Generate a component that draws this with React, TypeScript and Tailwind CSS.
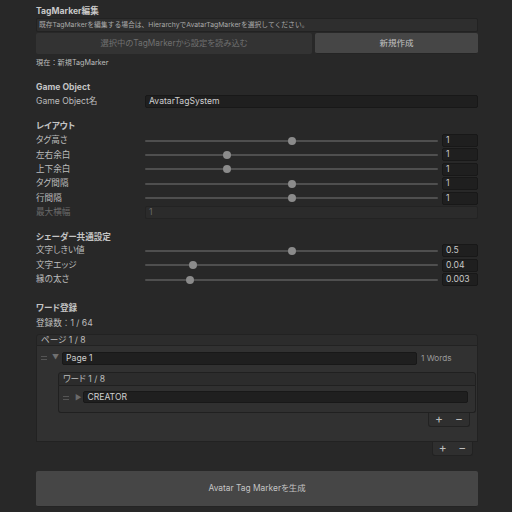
import React from 'react';

const font = { fontFamily: 'Inter, "Noto Sans CJK JP", sans-serif' };

type SliderRowProps = { label: string; value: string; pos: number };

// knob position is a fraction of the track width
const SliderRow: React.FC<SliderRowProps> = ({ label, value, pos }) => (
  <div className="flex items-center h-[14.4px]">
    <span className="w-[109px] text-[#bdbdbd]">{label}</span>
    <div className="relative flex-1 h-full flex items-center mr-[4px]">
      <div className="w-full h-[2px] bg-[#4f4f4f] rounded" />
      <div
        className="absolute w-[8px] h-[8px] rounded-full bg-[#8b8b8b] -translate-x-1/2"
        style={{ left: `${pos * 100}%` }}
      />
    </div>
    <div className="w-[36px] h-[13px] bg-[#1f1f1f] border border-[#181818] rounded-[2px] px-[3px] leading-[11px] text-[#c8c8c8]">
      {value}
    </div>
  </div>
);

const Handle = () => (
  <div className="flex flex-col gap-[2px] w-[6px]">
    <div className="h-px bg-[#555555]" />
    <div className="h-px bg-[#555555]" />
  </div>
);

const PlusMinus: React.FC<{ className?: string }> = ({ className }) => (
  <div
    className={`flex items-center justify-around h-[14px] bg-[#2f2f2f] border border-t-0 border-[#222222] rounded-b-[3px] text-[#bdbdbd] text-[12px] leading-none ${className ?? ''}`}
  >
    <span>+</span>
    <span>−</span>
  </div>
);

export default function App() {
  return (
    <div
      className="w-[512px] h-[512px] bg-[#282828] overflow-hidden text-[8.6px] [font-feature-settings:'palt']"
      style={font}
    >
      <div className="ml-[36px] w-[442px] flex flex-col">
        {/* TagMarker 編集 */}
        <div className="mt-[5px] h-[12px] leading-[12px] font-bold text-[#c8c8c8]">TagMarker編集</div>
        <div className="mt-[1px] h-[14px] bg-[#2e2e2e] border border-[#222222] rounded-[2px] px-[2px] leading-[12px] text-[#a8a8a8] text-[6.8px] whitespace-nowrap overflow-hidden [font-feature-settings:normal]">
          既存TagMarkerを編集する場合は、HierarchyでAvatarTagMarkerを選択してください。
        </div>
        <div className="mt-[1px] flex gap-[3px] h-[21px]">
          <div className="w-[276px] bg-[#333333] rounded-[2px] flex items-center justify-center text-[#707070] text-[8.3px]">
            選択中のTagMarkerから設定を読み込む
          </div>
          <div className="flex-1 bg-[#464646] rounded-[2px] border-b border-[#242424] flex items-center justify-center text-[#c4c4c4] text-[8.5px]">
            新規作成
          </div>
        </div>
        <div className="mt-[3px] h-[12px] leading-[12px] text-[#bdbdbd] text-[7.2px] [font-feature-settings:normal]">
          現在：新規TagMarker
        </div>

        {/* Game Object */}
        <div className="mt-[11px] h-[14px] leading-[14px] font-bold text-[#c4c4c4]">Game Object</div>
        <div className="flex items-center h-[14.4px]">
          <span className="w-[109px] text-[#bdbdbd]">Game Object名</span>
          <div className="flex-1 h-[13px] bg-[#1f1f1f] border border-[#181818] rounded-[2px] px-[3px] leading-[11px] text-[#d0d0d0]">
            AvatarTagSystem
          </div>
        </div>

        {/* レイアウト */}
        <div className="mt-[11px] h-[14px] leading-[14px] font-bold text-[#c4c4c4]">レイアウト</div>
        <SliderRow label="タグ高さ" value="1" pos={0.5} />
        <SliderRow label="左右余白" value="1" pos={0.28} />
        <SliderRow label="上下余白" value="1" pos={0.28} />
        <SliderRow label="タグ間隔" value="1" pos={0.5} />
        <SliderRow label="行間隔" value="1" pos={0.5} />
        <div className="flex items-center h-[14.4px]">
          <span className="w-[109px] text-[#6a6a6a]">最大横幅</span>
          <div className="flex-1 h-[13px] bg-[#2b2b2b] border border-[#232323] rounded-[2px] px-[3px] leading-[11px] text-[#6a6a6a]">
            1
          </div>
        </div>

        {/* シェーダー共通設定 */}
        <div className="mt-[10px] h-[14px] leading-[14px] font-bold text-[#c4c4c4]">シェーダー共通設定</div>
        <SliderRow label="文字しきい値" value="0.5" pos={0.5} />
        <SliderRow label="文字エッジ" value="0.04" pos={0.165} />
        <SliderRow label="縁の太さ" value="0.003" pos={0.155} />

        {/* ワード登録 */}
        <div className="mt-[14px] h-[14px] leading-[14px] font-bold text-[#c4c4c4]">ワード登録</div>
        <div className="mt-[1px] h-[14px] leading-[14px] text-[#bdbdbd] [font-feature-settings:normal]">
          登録数：1 / 64
        </div>

        {/* page list */}
        <div className="mt-[4px] h-[12px] bg-[#2c2c2c] border border-[#222222] rounded-t-[3px] px-[4px] leading-[10px] text-[#bdbdbd]">
          ページ 1 / 8
        </div>
        <div className="h-[96px] bg-[#313131] border border-t-0 border-[#222222] flex flex-col">
          <div className="mt-[6px] flex items-center h-[13px]">
            <div className="ml-[4px]"><Handle /></div>
            <span className="ml-[5px] text-[#707070] text-[7px]">▼</span>
            <div className="ml-[3px] w-[355px] h-[13px] bg-[#1f1f1f] border border-[#181818] rounded-[2px] px-[3px] leading-[11px] text-[#d0d0d0]">
              Page 1
            </div>
            <span className="ml-[4px] text-[#9a9a9a] text-[8.2px]">1 Words</span>
          </div>
          <div className="mt-[7px] ml-[21px] w-[418px] flex flex-col">
            <div className="h-[14px] bg-[#2c2c2c] border border-[#202020] rounded-t-[3px] px-[4px] leading-[12px] text-[#bdbdbd]">
              ワード 1 / 8
            </div>
            <div className="h-[27px] bg-[#303030] border border-t-0 border-[#202020] rounded-b-[3px] flex items-start pt-[5px]">
              <div className="ml-[4px] mt-[5px]"><Handle /></div>
              <span className="ml-[6px] mt-[2px] text-[#6a6a6a] text-[7px]">▶</span>
              <div className="ml-[2px] w-[385px] h-[12px] bg-[#1f1f1f] border border-[#181818] rounded-[2px] px-[3px] leading-[10px] text-[#d0d0d0]">
                CREATOR
              </div>
            </div>
            <PlusMinus className="self-end mr-[6px] w-[42px]" />
          </div>
        </div>
        <PlusMinus className="self-end mr-[5px] w-[41px]" />

        {/* generate */}
        <div className="mt-[15px] h-[36px] bg-[#464646] rounded-[2px] border-b border-[#242424] flex items-center justify-center text-[#c4c4c4] text-[8.4px]">
          Avatar Tag Markerを生成
        </div>
      </div>
    </div>
  );
}
